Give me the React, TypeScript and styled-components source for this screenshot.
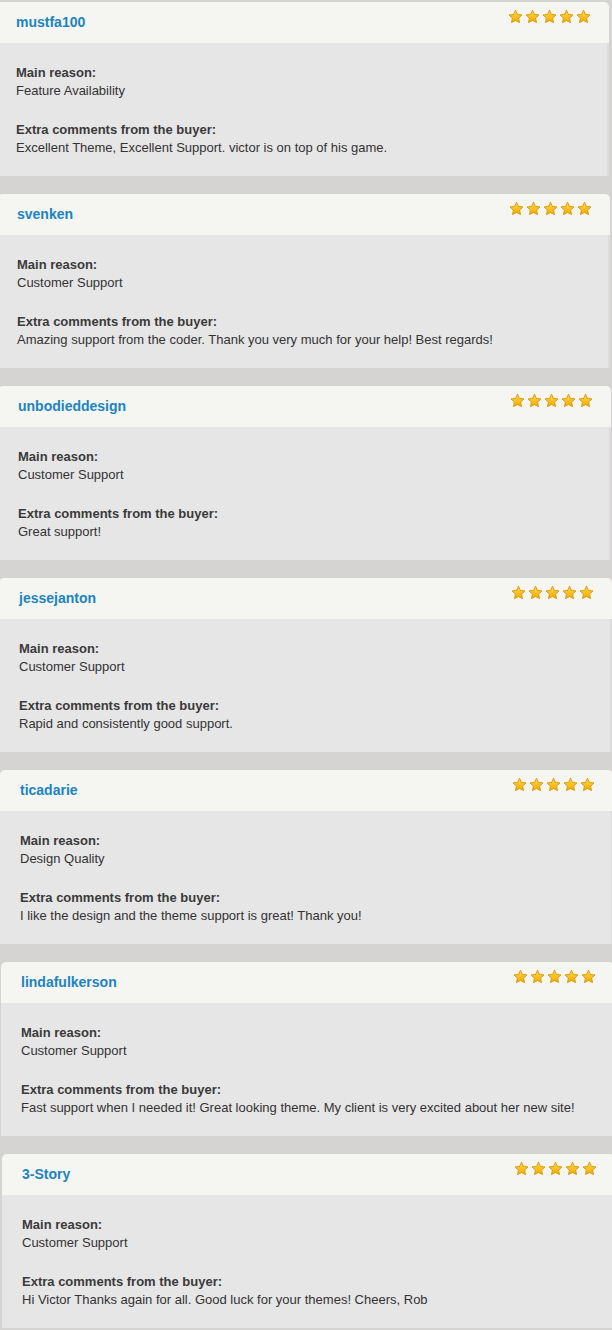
import styled, { createGlobalStyle } from 'styled-components'

const GlobalStyle = createGlobalStyle`
    html, body {
        margin: 0;
        padding: 0;
        background: #d5d4d2;
        font-family: "Liberation Sans", Arial, Helvetica, sans-serif;
        overflow-x: hidden;
    }
`

interface Review {
    user: string;
    reason: string;
    comment: string;
}

const reviews: Review[] = [
    { user: 'mustfa100', reason: 'Feature Availability', comment: 'Excellent Theme, Excellent Support. victor is on top of his game.' },
    { user: 'svenken', reason: 'Customer Support', comment: 'Amazing support from the coder. Thank you very much for your help! Best regards!' },
    { user: 'unbodieddesign', reason: 'Customer Support', comment: 'Great support!' },
    { user: 'jessejanton', reason: 'Customer Support', comment: 'Rapid and consistently good support.' },
    { user: 'ticadarie', reason: 'Design Quality', comment: 'I like the design and the theme support is great! Thank you!' },
    { user: 'lindafulkerson', reason: 'Customer Support', comment: 'Fast support when I needed it! Great looking theme. My client is very excited about her new site!' },
    { user: '3-Story', reason: 'Customer Support', comment: 'Hi Victor Thanks again for all. Good luck for your themes! Cheers, Rob' },
]

const ReviewList = styled.div`
    display: flex;
    flex-direction: column;
    gap: 18px;
    padding-top: 2px;
    width: 612px;
    overflow: hidden;
`

const Card = styled.div<{ $shift: number }>`
    width: 613px;
    margin-left: ${props => -4 + props.$shift}px;
    flex-shrink: 0;
    color: #333;
`

const CardHeader = styled.div`
    height: 41px;
    box-sizing: border-box;
    background-color: #f5f5f1;
    border-radius: 5px 5px 0 0;
    display: flex;
    justify-content: space-between;
    align-items: flex-start;
    padding: 0 18px 0 20px;
`

const UserName = styled.a`
    font-size: 14px;
    font-weight: bold;
    color: #1c84be;
    line-height: 41px;
    text-decoration: none;
`

const Stars = styled.div`
    display: flex;
    gap: 2px;
    padding-top: 7px;
`

const CardBody = styled.div`
    height: 133px;
    box-sizing: border-box;
    background-color: #e6e6e6;
    border-right: 2px solid #dcdcdc;
    padding: 21px 20px 0;
    font-size: 13px;
    line-height: 18px;
`

const Field = styled.div`
    & + & {
        margin-top: 21px;
    }
`

const FieldLabel = styled.div`
    font-weight: bold;
    color: #3a3a3a;
`

const FieldValue = styled.div`
    color: #333;
`

const Star = () => (
    <svg width="15" height="15" viewBox="0 0 16 16">
        <defs>
            <linearGradient id="starFill" x1="0" y1="0" x2="0" y2="1">
                <stop offset="0" stopColor="#ffd84a" />
                <stop offset="1" stopColor="#f2a900" />
            </linearGradient>
        </defs>
        <path
            d="M8 1.3 L10.06 5.77 L14.94 6.34 L11.33 9.68 L12.29 14.51 L8 12.25 L3.71 14.51 L4.67 9.68 L1.06 6.34 L5.94 5.77 Z"
            fill="url(#starFill)"
            stroke="#d9980c"
            strokeWidth="1"
            strokeLinejoin="round"
        />
    </svg>
)

const ReviewCard = ({ review, index }: { review: Review, index: number }) => (
    <Card $shift={index}>
        <CardHeader>
            <UserName>{review.user}</UserName>
            <Stars>
                {[0, 1, 2, 3, 4].map(i => <Star key={i} />)}
            </Stars>
        </CardHeader>
        <CardBody>
            <Field>
                <FieldLabel>Main reason:</FieldLabel>
                <FieldValue>{review.reason}</FieldValue>
            </Field>
            <Field>
                <FieldLabel>Extra comments from the buyer:</FieldLabel>
                <FieldValue>{review.comment}</FieldValue>
            </Field>
        </CardBody>
    </Card>
)

export default function App() {
    return (
        <>
            <GlobalStyle />
            <ReviewList>
                {reviews.map((r, i) => <ReviewCard key={r.user} review={r} index={i} />)}
            </ReviewList>
        </>
    )
}
